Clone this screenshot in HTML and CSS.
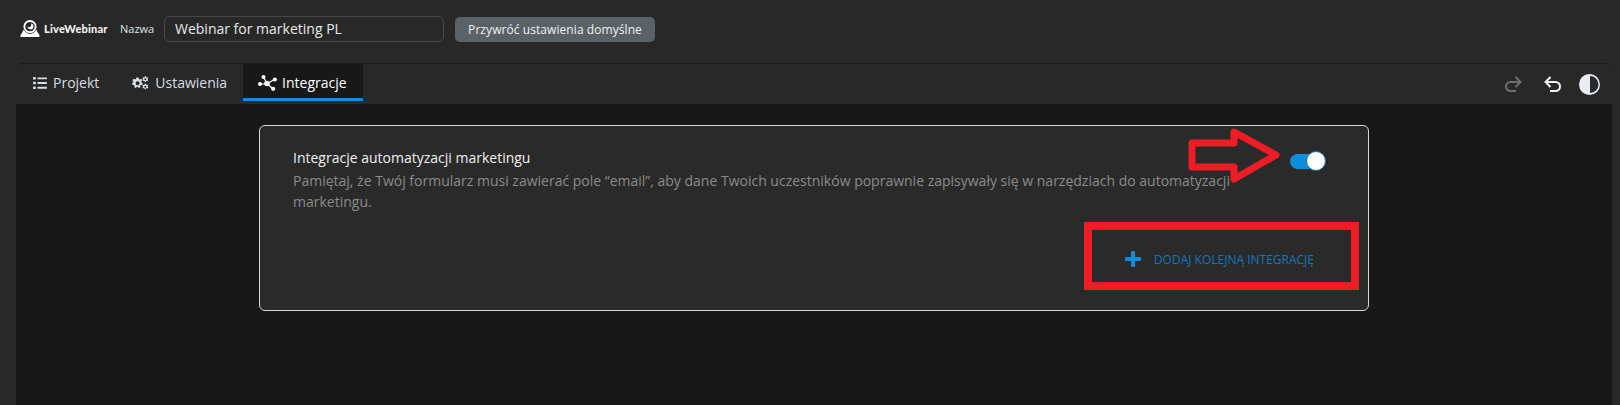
FILE: index.html
```html
<!DOCTYPE html>
<html lang="pl">
<head>
	<meta name="viewport" content="width=device-width, initial-scale=1">
	<title>Integracje</title>
	<link rel="stylesheet" href="styles.css">
</head>
<body>
<header class="topbar">
	<div class="logo">
		<svg class="logo-icon" width="20" height="18" viewBox="0 0 20 18">
			<path fill="#fff" fill-rule="evenodd" d="M10 0a6.600 6.600 0 1 1 0 13.200A6.600 6.600 0 0 1 10 0zm0 1.900a4.700 4.700 0 1 0 0 9.400 4.700 4.700 0 0 0 0-9.400z"/>
			<path fill="#fff" d="M10.600 3.400a3 3 0 1 1-3.200 3.200 2 2 0 0 0 3.200-3.200z"/>
			<path fill="#fff" d="M3.600 9.600c.9 2 3.400 4.400 6.400 4.400s5.500-2.400 6.400-4.400c.6 1.800 1.600 3.800 2.900 5.100.6.700.4 2.300-.7 2.300H1.400c-1.100 0-1.300-1.600-.7-2.300 1.300-1.300 2.300-3.300 2.900-5.100z"/>
		</svg>
		<span class="logo-text">LiveWebinar</span>
	</div>
	<label class="name-label">Nazwa</label>
	<div class="name-input">Webinar for marketing PL</div>
	<button class="btn-reset">Przywróć ustawienia domyślne</button>
</header>

<main class="shell">
	<nav class="tabs">
		<a class="tab tab-first">
			<svg width="14" height="12" viewBox="0 0 15 12" preserveAspectRatio="none" fill="#d8dde2">
				<rect x="0" y="0" width="3" height="2.600" rx=".5"/><rect x="0" y="4.700" width="3" height="2.600" rx=".5"/><rect x="0" y="9.400" width="3" height="2.600" rx=".5"/>
				<rect x="4.800" y=".4" width="10.200" height="1.900" rx=".4"/><rect x="4.800" y="5.100" width="10.200" height="1.900" rx=".4"/><rect x="4.800" y="9.800" width="10.200" height="1.900" rx=".4"/>
			</svg>
			Projekt
		</a>
		<a class="tab">
			<svg width="18" height="14" viewBox="0 0 18 14" fill="#d8dde2">
				<path fill-rule="evenodd" d="M5.600 1.500h2l.3 1.400 1 .5 1.300-.6 1.200 1.500-1 1 .1 1.100 1.200.7-.5 1.900-1.400-.1-.7.9.4 1.400-1.800.8-.8-1.200H5.800l-.8 1.200-1.700-.8.3-1.400-.7-.9-1.400.1-.5-1.900 1.200-.7.1-1.100-1-1 1.200-1.500 1.300.6 1-.5zM6.600 5.200a2 2 0 1 0 0 4 2 2 0 0 0 0-4z"/>
				<path fill-rule="evenodd" d="M13.800.3l1.100 0 .3.900.6.300.9-.3.6.9-.6.700v.6l.6.700-.6.900-.9-.3-.6.300-.3.900h-1.100l-.3-.9-.6-.3-.9.300-.6-.9.6-.7v-.6l-.6-.7.6-.9.9.3.6-.3zm.5 2a1 1 0 1 0 0 2 1 1 0 0 0 0-2z"/>
				<path fill-rule="evenodd" d="M13.800 7.700h1.100l.3.900.6.300.9-.3.6.9-.6.7v.6l.6.7-.6.9-.9-.3-.6.3-.3.900h-1.100l-.3-.9-.6-.3-.9.300-.6-.9.6-.7v-.6l-.6-.7.6-.9.9.3.6-.3zm.5 2a1 1 0 1 0 0 2 1 1 0 0 0 0-2z"/>
			</svg>
			Ustawienia
		</a>
		<a class="tab tab-active">
			<svg width="19" height="16" viewBox="0 0 19 16" fill="#fff">
				<path fill="none" stroke="#fff" stroke-width="1.200" d="M5.500 2L9 8.500M2 9H9M16.500 4.500L9 8.500M9 8.500l6 5.500"/>
				<circle cx="5.500" cy="2" r="2"/>
				<circle cx="16.800" cy="4.500" r="2.100"/>
				<circle cx="2" cy="9" r="2"/>
				<circle cx="9" cy="8.500" r="2.800"/>
				<circle cx="15.200" cy="13.800" r="2.100"/>
			</svg>
			Integracje
		</a>
		<div class="tools">
			<svg width="17" height="16" viewBox="0 0 17 16" fill="none" stroke="#6f6f6f" stroke-width="2">
				<path d="M15.500 6H5.500a4.500 4.500 0 0 0 0 9H11"/>
				<path d="M10.500 1l5 5-5 5"/>
			</svg>
			<svg width="17" height="16" viewBox="0 0 17 16" fill="none" stroke="#f1f3f5" stroke-width="2">
				<path d="M1.500 6H11.500a4.500 4.500 0 0 1 0 9H6"/>
				<path d="M6.500 1l-5 5 5 5"/>
			</svg>
			<svg class="tool-contrast" width="21" height="21" viewBox="0 0 21 21">
				<circle cx="10.500" cy="10.500" r="10.500" fill="#e9edf1"/>
				<path fill="#2a2a2a" d="M11 2a8.500 8.500 0 0 1 0 17z"/>
			</svg>
		</div>
	</nav>

	<section class="content">
		<div class="card">
			<div class="card-row">
				<div class="card-text">
					<h2 class="card-title">Integracje automatyzacji marketingu</h2>
					<p class="card-desc">Pamiętaj, że Twój formularz musi zawierać pole “email”, aby dane Twoich uczestników poprawnie zapisywały się w narzędziach do automatyzacji marketingu.</p>
				</div>
				<div class="switch"><span class="knob"></span></div>
			</div>
			<div class="card-actions">
				<a class="add-link">
					<svg width="16" height="16" viewBox="0 0 16 16" fill="#0d8ddb">
						<rect x="6" y="0" width="4" height="16" rx="1"/>
						<rect x="0" y="6" width="16" height="4" rx="1"/>
					</svg>
					Dodaj kolejną integrację
				</a>
			</div>

			<svg class="mark-arrow" width="100" height="62" viewBox="0 0 100 62" fill="none" stroke="#ee1c25" stroke-width="7" stroke-linejoin="round">
				<path d="M4 17H46V6L88 29 46 53V41H4z"/>
			</svg>
			<div class="mark-box"></div>
		</div>
	</section>
</main>
</body>
</html>
```

FILE: styles.css
```css
* {
	box-sizing: border-box;
	margin: 0;
	padding: 0;
}

html, body {
	height: 100%;
}

body {
	font-family: 'Open Sans', sans-serif;
	font-size: 14px;
	background: #282828;
	color: #e6e9ec;
	display: flex;
	flex-direction: column;
	overflow: hidden;
}

.topbar {
	height: 63px;
	flex: none;
	display: flex;
	align-items: flex-start;
	padding: 16px 0 0 20px;
}

.logo {
	display: flex;
	align-items: center;
	gap: 4px;
	width: 100px;
	height: 25px;
}

.logo-text {
	font-family: Lato, sans-serif;
	font-weight: 900;
	font-size: 11px;
	letter-spacing: 0.2px;
	color: #f2f2f2;
}

.name-label {
	width: 44px;
	font-size: 11px;
	line-height: 26px;
	color: #dfe3e6;
}

.name-input {
	width: 280px;
	height: 26px;
	padding: 0 10px;
	line-height: 24px;
	font-size: 14px;
	color: #e6e9ec;
	border: 1px solid #4a4a4a;
	border-radius: 6px;
}

.btn-reset {
	margin: 1px 0 0 11px;
	width: 200px;
	height: 25px;
	font-family: inherit;
	font-size: 12px;
	font-weight: 500;
	letter-spacing: 0.07px;
	color: #edf0f2;
	background: #5a6268;
	border: 0;
	border-radius: 5px;
}

.shell {
	flex: 1;
	margin: 0 8px 0 16px;
	display: flex;
	flex-direction: column;
	border-top: 1px solid #1a1a1a;
	border-radius: 6px 6px 0 0;
	overflow: hidden;
}

.tabs {
	height: 40px;
	flex: none;
	display: flex;
	align-items: flex-start;
	padding-left: 1px;
	background: #282828;
}

.tab {
	height: 37px;
	display: flex;
	align-items: center;
	gap: 6px;
	padding: 0 15px 0 16px;
	color: #d8dde2;
	font-size: 14px;
}

.tab-first {
	padding-right: 16px;
}

.tab-active {
	background: #181818;
	color: #fff;
	border-bottom: 3px solid #0d8ddb;
	padding: 3px 16px 0 15px;
	gap: 5px;
	margin-left: 1px;
}

.tools {
	margin-left: auto;
	height: 40px;
	display: flex;
	align-items: center;
	gap: 22px;
	padding-right: 12px;
}

.tool-contrast {
	margin-left: -4px;
}

.content {
	flex: 1;
	background: #181818;
	padding-top: 21px;
}

.card {
	position: relative;
	width: 1110px;
	height: 186px;
	margin: 0 auto;
	padding: 21px 34px 0 33px;
	background: #2a2a2a;
	border: 1px solid #d5d8de;
	border-radius: 6px;
}

.card-row {
	display: flex;
	justify-content: space-between;
	align-items: flex-start;
}

.card-text {
	width: 950px;
}

.card-title {
	margin-bottom: 2px;
	font-size: 14px;
	font-weight: 400;
	line-height: 21px;
	color: #eef0f2;
}

.card-desc {
	font-size: 14px;
	line-height: 21px;
	color: #8a8a8a;
}

.switch {
	position: relative;
	width: 34px;
	height: 15px;
	margin: 7px 10px 0 0;
	background: #0d8ddb;
	border-radius: 8px;
}

.knob {
	position: absolute;
	top: -3px;
	right: -2px;
	width: 20px;
	height: 20px;
	background: #fff;
	border: 1px solid #1272b0;
	border-radius: 50%;
}

.card-actions {
	display: flex;
	justify-content: flex-end;
	margin-top: 37px;
	padding-right: 20px;
}

.add-link {
	display: flex;
	align-items: center;
	gap: 13px;
	height: 20px;
	font-size: 12px;
	text-transform: uppercase;
	color: #1277bb;
}

.mark-arrow {
	position: absolute;
	left: 928px;
	top: 0;
}

.mark-box {
	position: absolute;
	left: 824px;
	top: 96px;
	width: 275px;
	height: 68px;
	border: 8px solid #ee1c25;
}
```
